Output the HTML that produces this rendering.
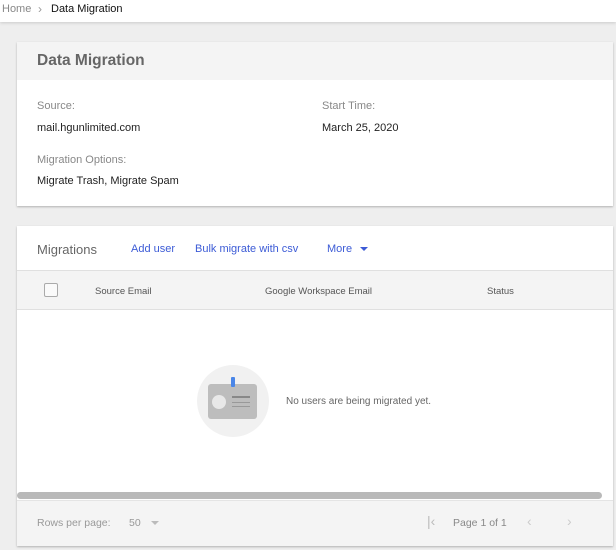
<!DOCTYPE html>
<html><head><meta charset="utf-8"><style>
*{margin:0;padding:0;box-sizing:border-box}
body{width:616px;height:550px;background:#eeeeee;font-family:"Liberation Sans",Arial,sans-serif;position:relative;overflow:hidden;color:#222}
.a{position:absolute;white-space:nowrap}
.top{position:absolute;left:0;top:0;width:616px;height:22px;background:#fff;box-shadow:0 1px 3px rgba(0,0,0,.15)}
.card{position:absolute;background:#fff;box-shadow:0 1px 2px rgba(0,0,0,.25)}
.lbl{font-size:11px;color:#888}
.val{font-size:11px;color:#222}
.link{font-size:11px;color:#3c5bd6}
</style></head><body>
<div class="top"></div>
<div class="a" style="left:2px;top:3px;font-size:11px;color:#888">Home</div>
<div class="a" style="left:38px;top:2px;font-size:12px;color:#999">&rsaquo;</div>
<div class="a" style="left:51px;top:3px;font-size:11px;color:#111">Data Migration</div>

<div class="card" style="left:17px;top:42px;width:596px;height:164px">
  <div style="height:38px;background:#f4f4f4"></div>
  <div class="a" style="left:20px;top:10px;font-size:15.5px;font-weight:bold;color:#666">Data Migration</div>
  <div class="a lbl" style="left:20px;top:58px">Source:</div>
  <div class="a val" style="left:20px;top:80px">mail.hgunlimited.com</div>
  <div class="a lbl" style="left:305px;top:58px">Start Time:</div>
  <div class="a val" style="left:305px;top:80px">March 25, 2020</div>
  <div class="a lbl" style="left:20px;top:112px">Migration Options:</div>
  <div class="a val" style="left:20px;top:133px">Migrate Trash, Migrate Spam</div>
</div>

<div class="card" style="left:17px;top:226px;width:596px;height:320px">
  <div class="a" style="left:20px;top:16px;font-size:13px;color:#666">Migrations</div>
  <div class="a link" style="left:114px;top:17px">Add user</div>
  <div class="a link" style="left:178px;top:17px">Bulk migrate with csv</div>
  <div class="a link" style="left:310px;top:17px">More</div>
  <div class="a" style="left:343px;top:21px;width:0;height:0;border-left:4px solid transparent;border-right:4px solid transparent;border-top:4px solid #3c5bd6"></div>
  <div class="a" style="left:0;top:44px;width:596px;height:40px;background:#f4f4f4;border-top:1px solid #e0e0e0;border-bottom:1px solid #e0e0e0"></div>
  <div class="a" style="left:27px;top:57px;width:14px;height:14px;border:1px solid #aaa;border-radius:2px;background:#fafafa"></div>
  <div class="a" style="left:78px;top:60px;font-size:9.5px;color:#555">Source Email</div>
  <div class="a" style="left:248px;top:60px;font-size:9.5px;color:#555">Google Workspace Email</div>
  <div class="a" style="left:470px;top:60px;font-size:9.5px;color:#555">Status</div>
  <div class="a" style="left:180px;top:139px;width:72px;height:72px;border-radius:50%;background:#f1f1f1"></div>
  <div class="a" style="left:191px;top:158px;width:49px;height:35px;border-radius:3px;background:#bdbdbd"></div>
  <div class="a" style="left:214px;top:151px;width:4px;height:10px;border-radius:1px;background:#4a86e8"></div>
  <div class="a" style="left:195px;top:169px;width:14px;height:14px;border-radius:50%;background:#e8e8e8"></div>
  <div class="a" style="left:215px;top:170px;width:18px;height:2px;background:#888"></div>
  <div class="a" style="left:215px;top:176px;width:18px;height:1px;background:#999"></div>
  <div class="a" style="left:215px;top:180px;width:18px;height:1px;background:#999"></div>
  <div class="a" style="left:269px;top:170px;font-size:10px;color:#666">No users are being migrated yet.</div>
  <div class="a" style="left:0;top:266px;width:585px;height:7px;border-radius:4px;background:#b9b9b9"></div>
  <div class="a" style="left:0;top:274px;width:596px;height:46px;background:#f4f4f4;border-top:1px solid #e4e4e4"></div>
  <div class="a" style="left:20px;top:291px;font-size:10.5px;color:#999">Rows per page:</div>
  <div class="a" style="left:112px;top:291px;font-size:10.5px;color:#999">50</div>
  <div class="a" style="left:134px;top:295px;width:0;height:0;border-left:4px solid transparent;border-right:4px solid transparent;border-top:4px solid #bbb"></div>
  <div class="a" style="left:410px;top:287px;font-size:14px;color:#bbb">|&lsaquo;</div>
  <div class="a" style="left:436px;top:291px;font-size:10.5px;color:#888">Page 1 of 1</div>
  <div class="a" style="left:510px;top:287px;font-size:14px;color:#ccc">&lsaquo;</div>
  <div class="a" style="left:550px;top:287px;font-size:14px;color:#ccc">&rsaquo;</div>
</div>
</body></html>
